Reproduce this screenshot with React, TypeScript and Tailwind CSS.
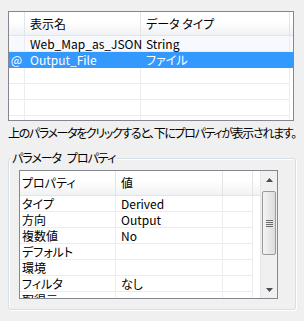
import React from "react"

type TopRow = { mark: string; name: string; type: string; selected?: boolean }

const topRows: TopRow[] = [
  { mark: "", name: "Web_Map_as_JSON", type: "String" },
  { mark: "@", name: "Output_File", type: "ファイル", selected: true },
  { mark: "", name: "", type: "" },
  { mark: "", name: "", type: "" },
  { mark: "", name: "", type: "" },
  { mark: "", name: "", type: "" },
]

const props: [string, string][] = [
  ["タイプ", "Derived"],
  ["方向", "Output"],
  ["複数値", "No"],
  ["デフォルト", ""],
  ["環境", ""],
  ["フィルタ", "なし"],
  ["取得元", ""],
]

function ParamTable() {
  return (
    <div className="ml-[8px] mt-[11px] h-[110px] w-[286px] overflow-hidden border border-[#828790] bg-white">
      {/* header */}
      <div className="flex h-[24px] border-b border-[#e3e4e6] bg-gradient-to-b from-white from-40% to-[#f1f2f4]">
        <div className="w-[16px] border-r border-[#e3e4e6]" />
        <div className="flex w-[116px] items-center border-r border-[#e3e4e6] pl-[5px]">表示名</div>
        <div className="flex w-[149px] items-center border-r border-[#e3e4e6] pl-[5px]">データ タイプ</div>
      </div>
      {topRows.map((r, i) => (
        <div key={i} className={`flex h-[16px] ${r.selected ? "bg-[#3399ff] text-white" : i === 0 ? "bg-[#f8f9fe]" : ""}`}>
          <div className={`flex w-[16px] items-center justify-center border-r ${r.selected ? "border-[#3399ff]" : "border-[#ececec] border-b"}`}>{r.mark}</div>
          <div className={`flex w-[116px] items-center pl-[5px] ${r.selected ? "" : "border-r border-b border-[#ececec]"}`}>{r.name}</div>
          <div className={`flex w-[149px] items-center pl-[5px] ${r.selected ? "" : "border-r border-b border-[#ececec]"}`}>{r.type}</div>
        </div>
      ))}
    </div>
  )
}

function ScrollBar() {
  return (
    <div className="flex h-full w-[17px] flex-col border-l border-[#e6e6e6] bg-[#f0f0f0]">
      <div className="flex h-[17px] items-center justify-center">
        <svg width="7" height="4" viewBox="0 0 7 4"><path d="M3.5 0 L7 4 L0 4 Z" fill="#4d4d4d" /></svg>
      </div>
      <div className="mx-[1px] mt-[3px] flex h-[64px] items-center justify-center rounded-[2px] border border-[#9a9a9a] bg-gradient-to-r from-[#f4f4f4] to-[#dcdcdc]">
        <div className="flex flex-col gap-[1px]">
          <div className="h-[1px] w-[7px] bg-[#6b6b6b]" />
          <div className="h-[1px] w-[7px] bg-[#6b6b6b]" />
          <div className="h-[1px] w-[7px] bg-[#6b6b6b]" />
          <div className="h-[1px] w-[7px] bg-[#6b6b6b]" />
        </div>
      </div>
      <div className="flex-1" />
      <div className="flex h-[17px] items-center justify-center">
        <svg width="7" height="4" viewBox="0 0 7 4"><path d="M0 0 L7 0 L3.5 4 Z" fill="#4d4d4d" /></svg>
      </div>
    </div>
  )
}

function PropertyGroup() {
  return (
    <div className="relative ml-[8px] mt-[17px] h-[152px] w-[288px] rounded-[3px] border border-[#d5dfe5] pl-[10px] pt-[11px] shadow-[inset_1px_1px_0_white,1px_1px_0_white]">
      <div className="absolute left-[2px] top-[-9px] bg-[#f0f0f0] px-[1px] leading-[16px] tracking-[-1px] [word-spacing:4px]">パラメータ プロパティ</div>
      <div className="flex h-[129px] w-[259px] overflow-hidden border border-[#828790] bg-white">
        <div className="flex-1 overflow-hidden">
          <div className="flex h-[25px] border-b border-[#e3e4e6] bg-gradient-to-b from-white from-40% to-[#f1f2f4]">
            <div className="flex w-[96px] items-center border-r border-[#e3e4e6] pl-[2px]">プロパティ</div>
            <div className="flex w-[107px] items-center border-r border-[#e3e4e6] pl-[5px]">値</div>
            <div className="w-[30px] border-r border-[#e3e4e6]" />
          </div>
          {props.map(([k, v]) => (
            <div key={k} className="flex h-[16px]">
              <div className="flex w-[96px] items-center border-r border-b border-[#ececec] pl-[2px]">{k}</div>
              <div className="flex w-[107px] items-center border-r border-b border-[#ececec] pl-[5px]">{v}</div>
              <div className="w-[30px] border-r border-b border-[#ececec]" />
            </div>
          ))}
        </div>
        <ScrollBar />
      </div>
    </div>
  )
}

export default function App() {
  return (
    <div className="flow-root h-[321px] w-[304px] overflow-hidden bg-[#f0f0f0] font-['Noto_Sans_CJK_JP',sans-serif] text-[12px] leading-[16px] text-black [font-feature-settings:'palt']">
      <ParamTable />
      <div className="ml-[8px] mt-[4px] whitespace-nowrap tracking-[-1.35px]">上のパラメータをクリックすると、下にプロパティが表示されます。</div>
      <PropertyGroup />
    </div>
  )
}
